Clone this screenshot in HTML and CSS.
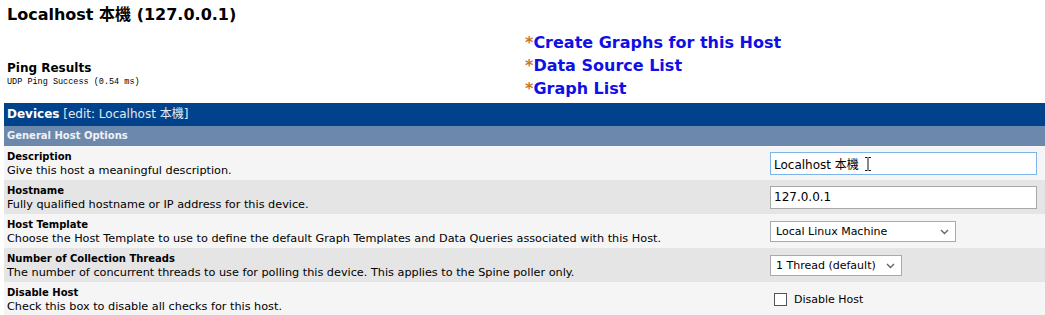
FILE: index.html
```html
<!DOCTYPE html>
<html lang="en">
<head>
    <meta charset="UTF-8">
    <title>Devices - Localhost</title>
    <link rel="stylesheet" href="styles.css">
</head>
<body>

    <!-- Заголовок хоста -->
    <div class="host-info">
        <div class="host-main">
            <h1 class="host-title">Localhost 本機 (127.0.0.1)</h1>
            <div class="ping-title">Ping Results</div>
            <div class="ping-result">UDP Ping Success (0.54 ms)</div>
        </div>
        <ul class="host-links">
            <li><span class="star">*</span><a href="#">Create Graphs for this Host</a></li>
            <li><span class="star">*</span><a href="#">Data Source List</a></li>
            <li><span class="star">*</span><a href="#">Graph List</a></li>
        </ul>
    </div>

    <!-- Форма редактирования -->
    <div class="edit-box">
        <div class="box-header"><b>Devices</b> <span class="box-sub">[edit: Localhost 本機]</span></div>
        <div class="box-subheader">General Host Options</div>

        <div class="form-row light">
            <div class="form-label">
                <div class="field-name">Description</div>
                <div class="field-desc">Give this host a meaningful description.</div>
            </div>
            <div class="form-field">
                <span class="input-wrap">
                    <input type="text" class="text-input focused" value="Localhost 本機">
                    <svg class="ibeam" width="8" height="16" viewBox="0 0 8 16">
                        <path d="M1 1.5h2.5M4.5 1.5H7M4 2v12M1 14.5h2.5M4.5 14.5H7" stroke="#111" stroke-width="1" fill="none"/>
                    </svg>
                </span>
            </div>
        </div>

        <div class="form-row dark">
            <div class="form-label">
                <div class="field-name">Hostname</div>
                <div class="field-desc">Fully qualified hostname or IP address for this device.</div>
            </div>
            <div class="form-field">
                <input type="text" class="text-input" value="127.0.0.1">
            </div>
        </div>

        <div class="form-row light">
            <div class="form-label">
                <div class="field-name">Host Template</div>
                <div class="field-desc">Choose the Host Template to use to define the default Graph Templates and Data Queries associated with this Host.</div>
            </div>
            <div class="form-field">
                <span class="select-wrap template-select">
                    <select><option>Local Linux Machine</option></select>
                    <svg class="chevron" width="9" height="6" viewBox="0 0 9 6"><path d="M1 1l3.5 3.5L8 1" stroke="#666" stroke-width="1.4" fill="none"/></svg>
                </span>
            </div>
        </div>

        <div class="form-row dark">
            <div class="form-label">
                <div class="field-name">Number of Collection Threads</div>
                <div class="field-desc">The number of concurrent threads to use for polling this device. This applies to the Spine poller only.</div>
            </div>
            <div class="form-field">
                <span class="select-wrap threads-select">
                    <select><option>1 Thread (default)</option></select>
                    <svg class="chevron" width="9" height="6" viewBox="0 0 9 6"><path d="M1 1l3.5 3.5L8 1" stroke="#666" stroke-width="1.4" fill="none"/></svg>
                </span>
            </div>
        </div>

        <div class="form-row light">
            <div class="form-label">
                <div class="field-name">Disable Host</div>
                <div class="field-desc">Check this box to disable all checks for this host.</div>
            </div>
            <div class="form-field">
                <label class="check-label"><input type="checkbox" class="checkbox"> Disable Host</label>
            </div>
        </div>
    </div>

</body>
</html>
```

FILE: styles.css
```css
body {
    margin: 0;
    font-family: "DejaVu Sans", Verdana, "Noto Sans CJK TC", sans-serif;
    background-color: #fff;
    color: #000;
}

.host-info {
    display: flex;
    align-items: flex-start;
    padding: 0 0 3px 7px;
}

.host-main {
    width: 518px;
    padding-top: 5px;
}

.host-title {
    margin: 0;
    font-size: 16px;
    line-height: 20px;
    font-weight: bold;
}

.ping-title {
    margin-top: 36px;
    font-size: 12px;
    line-height: 15px;
    font-weight: bold;
}

.ping-result {
    font-family: "Liberation Mono", monospace;
    font-size: 8.5px;
    line-height: 12px;
}

.host-links {
    list-style: none;
    margin: 0;
    padding: 31px 0 0 0;
}

.host-links li {
    font-size: 16px;
    line-height: 23px;
    font-weight: bold;
}

.host-links .star {
    color: #c87533;
}

.host-links a {
    color: #0f0fe6;
    text-decoration: none;
}

.edit-box {
    margin-left: 4px;
}

.box-header {
    background-color: #00438c;
    color: #fff;
    font-size: 12px;
    line-height: 23px;
    padding: 0 3px;
}

.box-sub {
    color: #e2e8f1;
}

.box-subheader {
    background-color: #6d88ad;
    color: #f0f3f7;
    font-size: 10px;
    line-height: 20px;
    font-weight: bold;
    padding: 0 3px;
}

.form-row {
    display: grid;
    grid-template-columns: 766px 1fr;
    align-items: center;
}

.form-row.light {
    background-color: #f5f5f5;
}

.form-row.dark {
    background-color: #e5e5e5;
}

.form-label {
    padding: 4px 3px 2px 3px;
    font-size: 11.25px;
    line-height: 14px;
}

.field-name {
    font-size: 10px;
    font-weight: bold;
}

.form-field {
    font-size: 12px;
}

.input-wrap,
.select-wrap {
    position: relative;
    display: inline-block;
}

.text-input {
    box-sizing: border-box;
    width: 267px;
    height: 23px;
    margin: 0;
    padding: 0 3px;
    border: 1px solid #a9a9a9;
    background-color: #fff;
    font-family: "DejaVu Sans", Verdana, "Noto Sans CJK TC", sans-serif;
    font-size: 12px;
    color: #000;
    vertical-align: middle;
}

.text-input.focused {
    border-color: #7eb4ea;
    outline: none;
}

.ibeam {
    position: absolute;
    left: 94px;
    top: 4px;
}

.select-wrap select {
    box-sizing: border-box;
    height: 21px;
    margin: 0;
    padding: 0 0 0 5px;
    border: 1px solid #a9a9a9;
    background-color: #fff;
    font-family: "DejaVu Sans", Verdana, sans-serif;
    font-size: 11px;
    color: #000;
    -webkit-appearance: none;
    appearance: none;
    vertical-align: middle;
}

.template-select select {
    width: 186px;
}

.threads-select select {
    width: 132px;
}

.chevron {
    position: absolute;
    right: 7px;
    top: 8px;
    pointer-events: none;
}

.check-label {
    display: inline-flex;
    align-items: center;
    font-size: 11px;
    margin: 4px 0 0 4px;
}

.checkbox {
    -webkit-appearance: none;
    appearance: none;
    width: 13px;
    height: 13px;
    margin: 0 7px 0 0;
    border: 1px solid #555;
    background-color: #fff;
}
```
